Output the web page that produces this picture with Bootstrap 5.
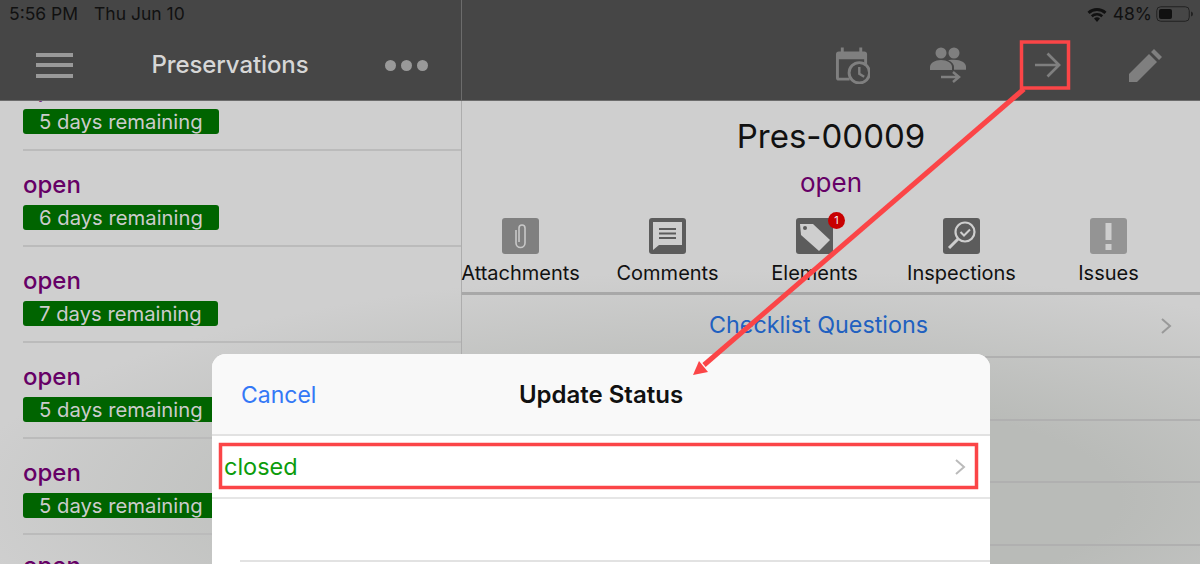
<!DOCTYPE html>
<html lang="en">
<head>
<meta charset="UTF-8">
<meta name="viewport" content="width=device-width, initial-scale=1.0">
<title>Preservations</title>
<link href="https://cdn.jsdelivr.net/npm/bootstrap@5.3.3/dist/css/bootstrap.min.css" rel="stylesheet">
<style>
  html, body { height: 564px; overflow: hidden; }
  body { font-family: Inter, "Noto Sans", sans-serif; color: #111; background: #ccc; }
  .screen { width: 1200px; height: 564px; overflow: hidden; background: radial-gradient(ellipse 800px 230px at 760px 500px, #b9bbb8 45%, rgba(185,187,184,0) 100%), #cfcfcf; }
  .side-pane { width: 462px; height: 564px; border-right: 1px solid #adadad; }
  .main-pane { width: 738px; height: 564px; }
  .top-bar { height: 101px; background: #464646; border-bottom: 1px solid #6c6c6c; flex: none; position: relative; z-index: 1; }
  .side-pane .top-bar { margin-right: -1px; border-right: 1px solid #6c6c6c; }
  .status-row { height: 28px; font-size: 17.5px; color: #111; padding: 0 6px 0 9px; }
  .status-row span + span { margin-left: 16px; }
  .bar-row { height: 72px; padding-top: 2px; }
  .burger { width: 37px; height: 25px; margin-left: 36px; background: linear-gradient(#999 4px, transparent 4px 10.5px, #999 10.5px 14.5px, transparent 14.5px 21px, #999 21px); }
  .bar-title { font-size: 24px; font-weight: 500; color: #d6d6d6; letter-spacing: -.1px; margin-left: 7px; }
  .dots { margin-right: 33px; }
  .dots i { display: block; width: 11px; height: 11px; border-radius: 50%; background: #999; margin-left: 5px; }
  .tool-row { padding-right: 6px; }
  .tool-btn { width: 97.5px; }
  .people-icon { margin-left: -4px; }
  .side-list { margin-top: -46px; overflow: hidden; }
  .job-row { height: 96px; margin-left: 23px; padding-top: 19px; border-bottom: 2px solid #bbb; }
  .job-row:last-child { padding-top: 16px; }
  .job-state { font-size: 24px; line-height: 30px; font-weight: 500; color: #660066; }
  .days-tag { display: inline-block; margin-top: 5px; height: 25px; line-height: 25px; padding: 0 16px; border-radius: 3px; background: #006400; color: #ccc; font-size: 20.25px; white-space: nowrap; }
  .pres-head { padding-top: 15px; height: 117px; text-align: center; }
  .pres-no { font-size: 33px; line-height: 40px; }
  .pres-state { font-size: 26px; line-height: 30px; margin-top: 12px; color: #660066; }
  .tile-row { height: 74px; margin-left: -15px; }
  .tile { width: 147px; text-align: center; position: relative; font-size: 20px; line-height: 26px; white-space: nowrap; }
  .tile svg { display: block; margin: 0 auto 6px; }
  .red-dot { position: absolute; left: 87px; top: -6px; width: 17px; height: 17px; border-radius: 50%; background: #c80000; color: #eee; font-size: 11px; line-height: 17px; text-align: center; }
  .detail-row { height: 62.5px; border-bottom: 2px solid #b0b0b0; font-size: 23.3px; flex: none; }
  .detail-top { border-top: 3px solid #a8a8a8; height: 66px; }
  .detail-link { color: #2060c0; margin-left: 247px; }
  .status-sheet { position: absolute; left: 212px; top: 354px; width: 778px; height: 230px; border-radius: 14px 14px 0 0; background: #fff; overflow: hidden; }
  .sheet-head { height: 82px; background: #f9f9f9; border-bottom: 2px solid #e2e2e2; position: relative; }
  .sheet-cancel { color: #3478f6; font-size: 23px; margin-left: 29px; padding-top: 2px; }
  .sheet-title { position: absolute; left: 0; right: 0; top: 26px; text-align: center; font-size: 24px; line-height: 30px; font-weight: 600; color: #111; }
  .sheet-row { height: 63px; border-bottom: 2px solid #e6e6e6; padding: 0 24px 0 12px; font-size: 23.5px; color: #0c9c0c; }
  .sheet-blank { height: 63px; margin-left: 28px; border-bottom: 2px solid #e2e2e2; }
  .mark-layer { position: absolute; left: 0; top: 0; z-index: 2; pointer-events: none; }
</style>
</head>
<body>
<div class="screen position-relative d-flex">

  <div class="side-pane d-flex flex-column">
    <div class="top-bar">
      <div class="status-row d-flex align-items-center"><span>5:56 PM</span><span>Thu Jun 10</span></div>
      <div class="bar-row d-flex align-items-center justify-content-between">
        <div class="burger"></div>
        <div class="bar-title">Preservations</div>
        <div class="dots d-flex"><i></i><i></i><i></i></div>
      </div>
    </div>
    <div class="side-list">
      <div class="job-row"><div class="job-state">open</div><span class="days-tag">5 days remaining</span></div>
      <div class="job-row"><div class="job-state">open</div><span class="days-tag">6 days remaining</span></div>
      <div class="job-row"><div class="job-state">open</div><span class="days-tag">7 days remaining</span></div>
      <div class="job-row"><div class="job-state">open</div><span class="days-tag">5 days remaining</span></div>
      <div class="job-row"><div class="job-state">open</div><span class="days-tag">5 days remaining</span></div>
      <div class="job-row"><div class="job-state">open</div><span class="days-tag">5 days remaining</span></div>
    </div>
  </div>

  <div class="main-pane d-flex flex-column">
    <div class="top-bar">
      <div class="status-row d-flex align-items-center justify-content-end">
        <svg width="20" height="15" viewBox="0 0 20 15" fill="#111"><path d="M10 15l-3-3.400a4.500 4.500 0 0 1 6 0zM5.600 10.200L3.900 8.300a9.200 9.200 0 0 1 12.200 0l-1.700 1.900a6.600 6.600 0 0 0-8.800 0zM2.500 6.900L.5 4.800a14 14 0 0 1 19 0l-2 2.100a11.200 11.200 0 0 0-15 0z"/></svg>
        <span style="margin-left:6px">48%</span>
        <svg class="ms-1" width="38" height="16" viewBox="0 0 38 16"><rect x=".75" y=".75" width="32.500" height="14.500" rx="4" fill="none" stroke="#222"/><rect x="3" y="3" width="13" height="10" rx="2" fill="#111"/><path d="M35 5.500c1.500.5 2 1.500 2 2.500s-.5 2-2 2.500z" fill="#222"/></svg>
      </div>
      <div class="bar-row tool-row d-flex align-items-center justify-content-end">
        <div class="tool-btn text-center">
          <svg width="35" height="37" viewBox="0 0 36 37" fill="#7f7f7f"><path d="M6 0h3v4h16V0h3v4h2a3 3 0 0 1 3 3v11h-3v-6H4v19h11v3H4a3 3 0 0 1-3-3V7a3 3 0 0 1 3-3h2z"/><circle cx="25" cy="26" r="10.500" fill="#464646" stroke="#7f7f7f" stroke-width="3"/><path d="M25 20v7l5 3" fill="none" stroke="#7f7f7f" stroke-width="2.500"/></svg>
        </div>
        <div class="tool-btn text-center">
          <svg class="people-icon" width="38" height="37" viewBox="0 0 38 37" fill="#7f7f7f"><circle cx="12" cy="6" r="5.500"/><circle cx="25" cy="6" r="5.500"/><path d="M1 23v-3c0-4 5-7 11-7s11 3 11 7v3z"/><path d="M19 13.300c2-.5 3.900-.5 6-.5 7 0 12 3 12 7v3H25v-3c0-2.500-2-5-6-6.500z"/><path d="M12 30h17M24 25l6 5-6 5" fill="none" stroke="#7f7f7f" stroke-width="2.500"/></svg>
        </div>
        <div class="tool-btn text-center">
          <svg width="27" height="26" viewBox="0 0 28 26"><path d="M1 13h25M14 1l12 12-12 12" fill="none" stroke="#7f7f7f" stroke-width="2.800"/></svg>
        </div>
        <div class="tool-btn text-center">
          <svg width="33" height="33" viewBox="0 0 33 33" fill="#7f7f7f"><path d="M0 33v-8L20 5l8 8L8 33zM22 3l3-3 8 8-3 3z"/></svg>
        </div>
      </div>
    </div>

    <div class="pres-head">
      <div class="pres-no">Pres-00009</div>
      <div class="pres-state">open</div>
    </div>

    <div class="tile-row d-flex">
      <div class="tile">
        <svg width="37" height="36" viewBox="0 0 37 36"><rect width="37" height="36" rx="3" fill="#808080"/><path d="M14 12v13a4.500 4.500 0 0 0 9 0V10a3 3 0 0 0-6 0v14" fill="none" stroke="#c8c8c8" stroke-width="1.600"/></svg>
        Attachments
      </div>
      <div class="tile">
        <svg width="37" height="36" viewBox="0 0 37 36"><rect width="37" height="36" rx="3" fill="#5c5c5c"/><path d="M4 4h29v23H10l-6 5z" fill="#cecece"/><path d="M10 11h17M10 15.500h17M10 20h17" stroke="#5c5c5c" stroke-width="2"/></svg>
        Comments
      </div>
      <div class="tile">
        <svg width="37" height="36" viewBox="0 0 37 36"><rect width="37" height="36" rx="3" fill="#5c5c5c"/><path d="M4 6h13l17 16-11 11L5 17z" fill="#cecece"/><circle cx="9" cy="10" r="2" fill="#5c5c5c"/></svg>
        Elements
        <span class="red-dot">1</span>
      </div>
      <div class="tile">
        <svg width="37" height="36" viewBox="0 0 37 36"><rect width="37" height="36" rx="3" fill="#5c5c5c"/><circle cx="22" cy="14" r="9.500" fill="none" stroke="#cecece" stroke-width="2.200"/><path d="M15 21l-9 9" stroke="#cecece" stroke-width="3"/><path d="M17.500 14l3.500 3.500 6-6" fill="none" stroke="#cecece" stroke-width="2"/></svg>
        Inspections
      </div>
      <div class="tile">
        <svg width="37" height="36" viewBox="0 0 37 36"><rect width="37" height="36" rx="3" fill="#949494"/><path d="M15.500 5h6v17h-6zM15.500 26h6v6h-6z" fill="#cecece"/></svg>
        Issues
      </div>
    </div>

    <div class="detail-row detail-top d-flex align-items-center justify-content-between pe-4">
      <span class="detail-link">Checklist Questions</span>
      <svg class="me-1" width="12" height="18" viewBox="0 0 12 18"><path d="M2 2l8 7-8 7" fill="none" stroke="#999" stroke-width="2"/></svg>
    </div>
    <div class="detail-row"></div>
    <div class="detail-row"></div>
    <div class="detail-row"></div>
  </div>

  <div class="status-sheet">
    <div class="sheet-head d-flex align-items-center">
      <span class="sheet-cancel">Cancel</span>
      <span class="sheet-title">Update Status</span>
    </div>
    <div class="sheet-row d-flex align-items-center justify-content-between">
      <span>closed</span>
      <svg width="12" height="18" viewBox="0 0 12 18"><path d="M2 2l8 7-8 7" fill="none" stroke="#bbb" stroke-width="2"/></svg>
    </div>
    <div class="sheet-blank"></div>
  </div>

  <svg class="mark-layer" width="1200" height="564" viewBox="0 0 1200 564">
    <rect x="1021.500" y="42" width="47" height="46" fill="none" stroke="#fb4547" stroke-width="3.500"/>
    <rect x="220.500" y="444.500" width="756" height="43" fill="none" stroke="#fb4547" stroke-width="3.500"/>
    <path d="M1024 89L704 365" stroke="#fb4547" stroke-width="5" fill="none"/>
    <path d="M693 375l6-14 9 11z" fill="#fb4547"/>
  </svg>
</div>
<script src="https://cdn.jsdelivr.net/npm/bootstrap@5.3.3/dist/js/bootstrap.bundle.min.js"></script>
</body>
</html>
